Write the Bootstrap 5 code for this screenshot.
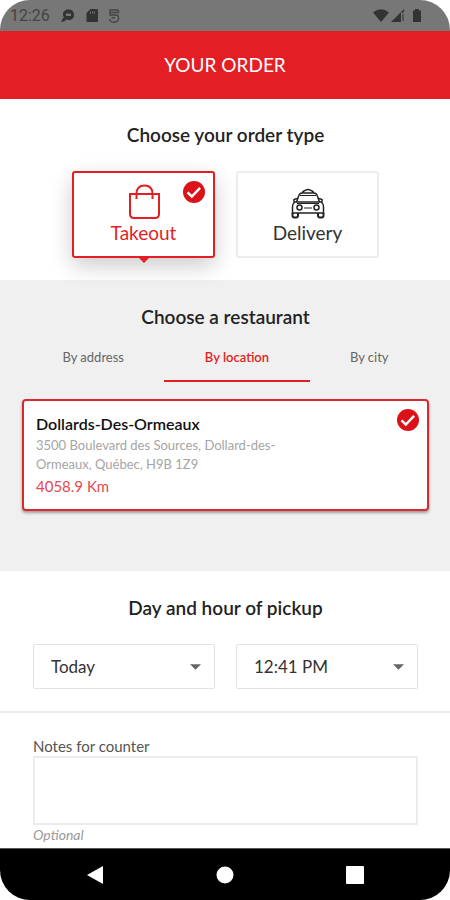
<!DOCTYPE html>
<html lang="en">
<head>
<meta charset="utf-8">
<meta name="viewport" content="width=device-width, initial-scale=1">
<title>Your order</title>
<link href="https://cdn.jsdelivr.net/npm/bootstrap@5.3.0/dist/css/bootstrap.min.css" rel="stylesheet">
<style>
  :root { --brand: #e31e24; --line: #ececec; }
  body { font-family: Lato, "Liberation Sans", sans-serif; color: #222; line-height: 20px; }
  .phone { border-radius: 30px; min-height: 100vh; }
  .status-bar { background: #777; color: #444; height: 31px; padding: 0 28px 0 10px; font: 16px/31px Roboto, sans-serif; }
  .status-bar svg { fill: #333; }
  .status-icons { gap: 10px; margin-left: 10px; }
  .app-header { background: var(--brand); padding: 24px 0; }
  .app-header h1 { font-size: 19px; line-height: 20px; }
  .section-title { font-size: 19px; line-height: 24px; font-weight: 600; }
  .order-type { padding: 24px 71px 22px 72px; }
  .type-grid { gap: 21px; margin-top: 24px; }
  .type-card { border: 2px solid var(--line); border-radius: 3px; height: 87px; padding-top: 10px; font-size: 19px; line-height: 24px; cursor: pointer; background: #fff; color: #333; }
  .type-card .tick, .type-card .pointer { display: none; }
  .btn-check:checked + .type-card { border-color: var(--brand); color: var(--brand); box-shadow: 0 8px 22px rgba(0,0,0,.2); }
  .btn-check:checked + .type-card .tick, .btn-check:checked + .type-card .pointer { display: block; }
  .tick { top: 8px; right: 8px; }
  .pointer { top: 100%; left: 50%; margin-left: -7px; }
  .restaurant { background: #f0f0f0; padding: 25px 21px 60px 22px; }
  .place-tabs { margin-top: 15px; }
  .place-tabs .nav-link { padding: 4px 0 14px; font-size: 13px; line-height: 18px; color: #666; border-radius: 0; border-bottom: 2px solid transparent; }
  .place-tabs .nav-link.active { color: var(--brand); border-color: var(--brand); font-weight: 600; }
  .place { border: 2px solid #da2a30; border-radius: 4px; margin-top: 17px; padding: 13px 12px; box-shadow: 0 2px 3px rgba(0,0,0,.35); }
  .place h3 { font-size: 16px; line-height: 20px; font-weight: 600; color: #111; }
  .place address { font-size: 13px; line-height: 19px; color: #a5a5a5; max-width: 260px; margin: 2px 0; }
  .distance { font-size: 15px; line-height: 20px; color: #e5484d; }
  .pickup { padding: 25px 32px 22px 33px; border-bottom: 2px solid var(--line); }
  .select-row { gap: 21px; margin-top: 24px; }
  .form-select.time-select { height: 45px; padding: 0 32px 0 17px; border: 1px solid #e2e2e2; border-radius: 2px; font-size: 17px; color: #333;
    background-image: url("data:image/svg+xml,%3Csvg xmlns='http://www.w3.org/2000/svg' viewBox='0 0 12 6'%3E%3Cpath d='M0 0h12L6 6z' fill='%23666'/%3E%3C/svg%3E");
    background-size: 11px 6px; background-position: right 13px center; }
  .notes { padding: 23px 32px 3px 33px; }
  .notes label { font-size: 15px; line-height: 20px; color: #555; }
  .form-control.notes-box { height: 69px; border: 2px solid var(--line); border-radius: 0; resize: none; }
  .hint { font-size: 14px; line-height: 20px; color: #999; }
  .nav-keys { background: #000; height: 52px; border-top: 1px solid #555; padding: 0 30px; }
  .nav-keys .btn { line-height: 0; border: 0; }
</style>
</head>
<body class="bg-white">
<svg class="d-none" xmlns="http://www.w3.org/2000/svg">
  <symbol id="tick" viewBox="0 0 22 22"><circle cx="11" cy="11" r="11" fill="#dc1219"/><path d="M4.500 11.300l4.300 4.200 8.300-8.600" fill="none" stroke="#fff" stroke-width="2.500"/></symbol>
</svg>
<div class="phone overflow-hidden d-flex flex-column">
  <div class="status-bar d-flex align-items-center">
    <span>12:26</span>
    <div class="status-icons d-flex align-items-center">
      <svg width="16" height="16" viewBox="0 0 16 16"><path fill-rule="evenodd" d="M8.500 1.500C12 1.500 14 3.500 14 7s-2 5-5.500 5c-1 0-1.700-.1-2.300-.4L4.500 13.300 1 14l1.500-3.200L4 9.500C3.400 8.700 3 8 3 6.700 3 3.500 5.200 1.500 8.500 1.500zM6 5.500v2.500h5V5.500z"/></svg>
      <svg width="12" height="15" viewBox="0 0 12 15"><path fill-rule="evenodd" d="M4.500 1H11a1 1 0 0 1 1 1v11a1 1 0 0 1-1 1H1.500a1 1 0 0 1-1-1V5zM4 3.500v2h1v-2zm2 0v2h1v-2zm2 0v2h1v-2z"/></svg>
      <svg width="12" height="16" viewBox="0 0 12 16"><path d="M10.500 2H2v5h6q2.500 0 2.500 2.500v1Q10.500 14 6 14.300 2 14 1.500 11M3.500 9.700H7M2.500 4.500h8V2" fill="none" stroke="#444" stroke-width="1.400"/></svg>
    </div>
    <svg class="ms-auto" width="49" height="16" viewBox="0 0 49 16"><path d="M0 4.500Q8-2 16 4.500L8 14z"/><path d="M18 14L31 1v3.500h-3V14z"/><path d="M29.500 6v7h1V6z"/><path d="M40 2.500h2V1h4v1.500h2V14h-8z"/></svg>
  </div>
  <header class="app-header text-center text-white"><h1 class="m-0 fw-normal">YOUR ORDER</h1></header>

  <main class="flex-grow-1">
    <section class="order-type">
      <h2 class="section-title text-center mb-0">Choose your order type</h2>
      <div class="type-grid d-flex">
        <input class="btn-check" type="radio" name="type" id="takeout" checked>
        <label class="type-card w-100 position-relative d-flex flex-column align-items-center" for="takeout">
          <svg class="tick position-absolute" width="22" height="22"><use href="#tick"/></svg>
          <svg width="36" height="38" viewBox="0 0 36 38" fill="none" stroke="#e31e24" stroke-width="2"><path d="M4 11h29v20q0 4-4 4H8q-4 0-4-4z"/><path d="M10.500 16v-5q0-8.500 8-8.500t8 8.500v5"/></svg>
          <span>Takeout</span>
          <svg class="pointer position-absolute" width="14" height="7" viewBox="0 0 14 7"><path d="M0 0h14L7 7z" fill="#e31e24"/></svg>
        </label>
        <input class="btn-check" type="radio" name="type" id="delivery">
        <label class="type-card w-100 position-relative d-flex flex-column align-items-center" for="delivery">
          <svg class="tick position-absolute" width="22" height="22"><use href="#tick"/></svg>
          <svg width="36" height="38" viewBox="0 0 36 38" fill="none" stroke="#222" stroke-width="1.500"><path d="M12 10q1-2 3-2.500 3-2 6 0 2 .5 3 2.500zM6.500 19l2.500-7q1-2 3-2h12q2 0 3 2l2.500 7"/><path d="M10 12.500h16" stroke-width="1"/><path d="M4.500 19h27q2 2 2 5v6h-31v-6q0-3 2-5z"/><path d="M7 20.500h22M14 25h8" stroke-width="1"/><circle cx="9.500" cy="24.500" r="2.500"/><circle cx="26.500" cy="24.500" r="2.500"/><path d="M2.500 30v2.500q0 2 2 2h1.500q2 0 2-2V30M28 30v2.500q0 2 2 2h1.500q2 0 2-2V30" stroke-width="2"/><path d="M7 15.500l-3 1v2.500M29 15.500l3 1v2.500"/></svg>
          <span>Delivery</span>
        </label>
      </div>
    </section>

    <section class="restaurant">
      <h2 class="section-title text-center mb-0">Choose a restaurant</h2>
      <nav class="place-tabs nav nav-fill">
        <a class="nav-link nav-item" href="#address">By address</a>
        <a class="nav-link nav-item active" href="#location" aria-current="page">By location</a>
        <a class="nav-link nav-item" href="#city">By city</a>
      </nav>
      <article class="place bg-white position-relative">
        <svg class="tick position-absolute" width="22" height="22"><use href="#tick"/></svg>
        <h3 class="mb-0">Dollards-Des-Ormeaux</h3>
        <address>3500 Boulevard des Sources, Dollard-des-Ormeaux, Québec, H9B 1Z9</address>
        <div class="distance">4058.9 Km</div>
      </article>
    </section>

    <section class="pickup">
      <h2 class="section-title text-center mb-0">Day and hour of pickup</h2>
      <div class="select-row d-flex">
        <select class="form-select time-select" aria-label="Day of pickup"><option>Today</option></select>
        <select class="form-select time-select" aria-label="Hour of pickup"><option>12:41 PM</option></select>
      </div>
    </section>

    <section class="notes">
      <label class="d-block" for="notes">Notes for counter</label>
      <textarea class="form-control notes-box" id="notes" aria-describedby="notes-hint"></textarea>
      <div class="hint fst-italic" id="notes-hint">Optional</div>
    </section>
  </main>

  <footer class="nav-keys d-flex align-items-center justify-content-around">
    <button class="btn" type="button" aria-label="Back"><svg width="18" height="20" viewBox="0 0 18 20"><path d="M17 1v18L1 10z" fill="#fff"/></svg></button>
    <button class="btn" type="button" aria-label="Home"><svg width="18" height="18" viewBox="0 0 18 18"><circle cx="9" cy="9" r="8.500" fill="#fff"/></svg></button>
    <button class="btn" type="button" aria-label="Recent apps"><svg width="18" height="18" viewBox="0 0 18 18"><rect width="18" height="18" rx="1" fill="#fff"/></svg></button>
  </footer>
</div>
<script src="https://cdn.jsdelivr.net/npm/bootstrap@5.3.0/dist/js/bootstrap.bundle.min.js"></script>
</body>
</html>
